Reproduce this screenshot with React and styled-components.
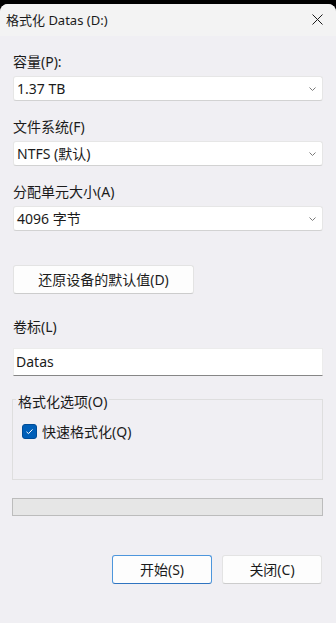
import React from "react";
import styled, { createGlobalStyle } from "styled-components";

const GlobalStyle = createGlobalStyle`
  html, body {
    margin: 0;
    padding: 0;
    background: #000000;
  }
  body {
    font-family: "Noto Sans", "Noto Sans CJK SC", sans-serif;
    color: #1b1b1b;
  }
`;

const Screen = styled.div`
  padding-top: 4px;
  background: #000000;
`;

const Window = styled.div`
  display: flex;
  flex-direction: column;
  height: 619px;
  background: #f0eff3;
  border-radius: 8px 8px 0 0;
  overflow: hidden;
`;

const TitleBar = styled.div`
  display: flex;
  align-items: center;
  justify-content: space-between;
  height: 32px;
  padding: 0 13px 0 6px;
  background: #f3f3f3;
  font-size: 13px;
  line-height: 18px;
`;

const CloseIcon = styled.svg`
  width: 11px;
  height: 11px;
  margin-top: -2px;
`;

const Content = styled.div`
  display: flex;
  flex-direction: column;
  padding: 16px 13px 0 13px;
`;

const FieldLabel = styled.div`
  font-size: 14px;
  line-height: 20px;
  margin-top: ${(p) => p.$gap || 0}px;
`;

const Select = styled.div`
  box-sizing: border-box;
  display: flex;
  align-items: center;
  justify-content: space-between;
  height: 25px;
  margin-top: 4px;
  padding: 0 6px 0 3px;
  background: #ffffff;
  border: 1px solid #e6e6e6;
  border-bottom-color: #d2d2d2;
  border-radius: 3px;
  font-size: 14px;
  line-height: 20px;
`;

const Chevron = styled.svg`
  width: 7px;
  height: 4px;
`;

const Button = styled.button`
  box-sizing: border-box;
  width: ${(p) => p.$width}px;
  height: 29px;
  margin-top: ${(p) => p.$gap || 0}px;
  padding: 0;
  background: #fdfdfd;
  border: 1px solid ${(p) => (p.$primary ? "#4d96dc" : "#e3e3e3")};
  border-bottom-color: ${(p) => (p.$primary ? "#2f74c0" : "#cccccc")};
  border-radius: 3px;
  font-family: inherit;
  font-size: 14px;
  line-height: 20px;
  color: #1b1b1b;
`;

const TextBox = styled.div`
  box-sizing: border-box;
  height: 28px;
  margin-top: 11px;
  padding: 0 2px;
  display: flex;
  align-items: center;
  background: #ffffff;
  border: 1px solid #ececec;
  border-bottom-color: #868686;
  font-size: 14px;
  line-height: 20px;
`;

const Group = styled.fieldset`
  box-sizing: border-box;
  min-width: 0;
  margin: 10px 0 0 -1px;
  padding: 10px 3px 37px 3px;
  border: 1px solid #dedede;
  border-top-color: #dedede;
`;

const Legend = styled.legend`
  padding: 6px 2px 0 2px;
  font-size: 14px;
  line-height: 20px;
`;

const CheckRow = styled.label`
  display: flex;
  align-items: center;
  gap: 5px;
  margin-left: 6px;
  font-size: 14px;
  line-height: 20px;
`;

const CheckBox = styled.span`
  box-sizing: border-box;
  display: flex;
  align-items: center;
  justify-content: center;
  width: 15px;
  height: 15px;
  margin-top: -1px;
  background: #005fb8;
  border: 1px solid #004c96;
  border-radius: 3px;
`;

const Progress = styled.div`
  box-sizing: border-box;
  height: 18px;
  margin: 18px 0 0 -1px;
  background: #e6e6e6;
  border: 1px solid #bcbcbc;
`;

const Footer = styled.div`
  display: flex;
  justify-content: flex-end;
  gap: 10px;
  margin: 39px 1px 0 0;
`;

const Dropdown = ({ value }) => (
  <Select>
    <span>{value}</span>
    <Chevron viewBox="0 0 7 4">
      <path d="M0.5 0.5 L3.5 3.5 L6.5 0.5" fill="none" stroke="#7a7a7a" strokeWidth="1" />
    </Chevron>
  </Select>
);

export default function App() {
  return (
    <>
      <GlobalStyle />
      <Screen>
        <Window>
          <TitleBar>
            <span>格式化 Datas (D:)</span>
            <CloseIcon viewBox="0 0 11 11">
              <path d="M0.5 0.5 L10.5 10.5 M10.5 0.5 L0.5 10.5" stroke="#1b1b1b" strokeWidth="1" />
            </CloseIcon>
          </TitleBar>
          <Content>
            <FieldLabel>容量(P):</FieldLabel>
            <Dropdown value="1.37 TB" />
            <FieldLabel $gap={16}>文件系统(F)</FieldLabel>
            <Dropdown value="NTFS (默认)" />
            <FieldLabel $gap={16}>分配单元大小(A)</FieldLabel>
            <Dropdown value="4096 字节" />
            <Button $width={181} $gap={34}>还原设备的默认值(D)</Button>
            <FieldLabel $gap={23}>卷标(L)</FieldLabel>
            <TextBox>Datas</TextBox>
            <Group>
              <Legend>格式化选项(O)</Legend>
              <CheckRow>
                <CheckBox>
                  <svg width="9" height="9" viewBox="0 0 9 9">
                    <path d="M1.5 4.8 L3.5 6.6 L7.5 2.4" fill="none" stroke="#ffffff" strokeWidth="1" />
                  </svg>
                </CheckBox>
                快速格式化(Q)
              </CheckRow>
            </Group>
            <Progress />
            <Footer>
              <Button $width={100} $primary>开始(S)</Button>
              <Button $width={100}>关闭(C)</Button>
            </Footer>
          </Content>
        </Window>
      </Screen>
    </>
  );
}
